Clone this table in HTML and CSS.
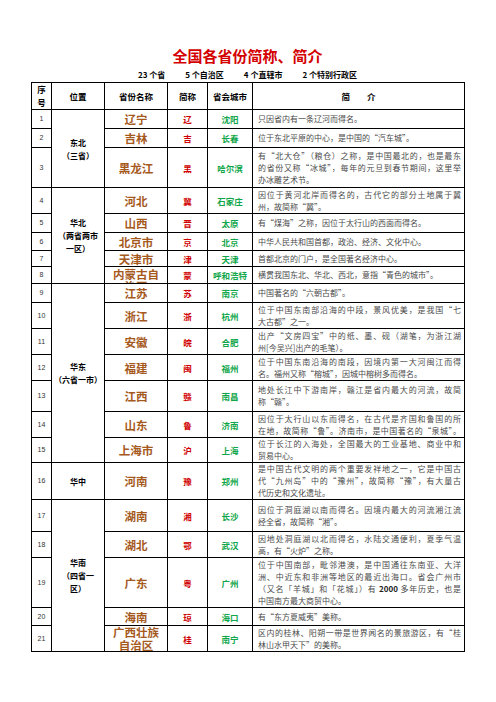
FILE: index.html
```html
<!DOCTYPE html>
<html lang="zh-CN">
<head>
<meta charset="utf-8">
<title>全国各省份简称、简介</title>
<link rel="stylesheet" href="styles.css">
</head>
<body>
<div class="page">
  <h1 class="title">全国各省份简称、简介</h1>
  <div class="summary"><span>23 个省</span><span>5 个自治区</span><span>4 个直辖市</span><span>2 个特别行政区</span></div>
  <table class="prov">
    <colgroup><col class="c-no"><col class="c-region"><col class="c-name"><col class="c-abbr"><col class="c-cap"><col class="c-desc"></colgroup>
    <thead>
      <tr class="h26"><th class="hno">序<br>号</th><th>位置</th><th>省份名称</th><th>简称</th><th>省会城市</th><th class="hdesc">简　　介</th></tr>
    </thead>
    <tbody>
      <tr class="h19"><td class="no">1</td><td class="region" rowspan="3">东北<br>（三省）</td><td class="name">辽宁</td><td class="abbr">辽</td><td class="cap">沈阳</td><td class="desc">只因省内有一条辽河而得名。</td></tr>
      <tr class="h19"><td class="no">2</td><td class="name">吉林</td><td class="abbr">吉</td><td class="cap">长春</td><td class="desc">位于东北平原的中心，是中国的“汽车城”。</td></tr>
      <tr class="h40"><td class="no">3</td><td class="name">黑龙江</td><td class="abbr">黑</td><td class="cap">哈尔滨</td><td class="desc"><span class="ln">有“北大仓”（粮仓）之称，是中国最北的，也是最东</span><span class="ln">的省份又称“冰城”，每年的元旦到春节期间，这里举</span>办冰雕艺术节。</td></tr>
      <tr class="h26"><td class="no">4</td><td class="region" rowspan="5">华北<br>（两省两市<br>一区）</td><td class="name">河北</td><td class="abbr">冀</td><td class="cap">石家庄</td><td class="desc"><span class="ln">因位于黄河北岸而得名的，古代它的部分土地属于冀</span>州，故简称“冀”。</td></tr>
      <tr class="h19"><td class="no">5</td><td class="name">山西</td><td class="abbr">晋</td><td class="cap">太原</td><td class="desc">有“煤海”之称，因位于太行山的西面而得名。</td></tr>
      <tr class="h18"><td class="no">6</td><td class="name">北京市</td><td class="abbr">京</td><td class="cap">北京</td><td class="desc">中华人民共和国首都，政治、经济、文化中心。</td></tr>
      <tr class="h16"><td class="no">7</td><td class="name">天津市</td><td class="abbr">津</td><td class="cap">天津</td><td class="desc">首都北京的门户，是全国著名经济中心。</td></tr>
      <tr class="h17"><td class="no">8</td><td class="name"><div class="clip">内蒙古自<br>治区</div></td><td class="abbr">蒙</td><td class="cap">呼和浩特</td><td class="desc">横贯我国东北、华北、西北，意指“青色的城市”。</td></tr>
      <tr class="h19"><td class="no">9</td><td class="region" rowspan="7">华东<br>（六省一市）</td><td class="name">江苏</td><td class="abbr">苏</td><td class="cap">南京</td><td class="desc">中国著名的“六朝古都”。</td></tr>
      <tr class="h26"><td class="no">10</td><td class="name">浙江</td><td class="abbr">浙</td><td class="cap">杭州</td><td class="desc"><span class="ln">位于中国东南部沿海的中段，景风优美，是我国“七</span>大古都”之一。</td></tr>
      <tr class="h26"><td class="no">11</td><td class="name">安徽</td><td class="abbr">皖</td><td class="cap">合肥</td><td class="desc"><span class="ln">出产“文房四宝”中的纸、墨、砚（湖笔，为浙江湖</span>州[今吴兴]出产的毛笔）。</td></tr>
      <tr class="h26"><td class="no">12</td><td class="name">福建</td><td class="abbr">闽</td><td class="cap">福州</td><td class="desc"><span class="ln">位于中国东南沿海的南段，因境内第一大河闽江而得</span>名。福州又称“榕城”，因城中榕树多而得名。</td></tr>
      <tr class="h31"><td class="no">13</td><td class="name">江西</td><td class="abbr">赣</td><td class="cap">南昌</td><td class="desc"><span class="ln">地处长江中下游南岸，赣江是省内最大的河流，故简</span>称“赣”。</td></tr>
      <tr class="h26"><td class="no">14</td><td class="name">山东</td><td class="abbr">鲁</td><td class="cap">济南</td><td class="desc"><span class="ln">因位于太行山以东而得名，在古代是齐国和鲁国的所</span><span class="ln">在地，故简称“鲁”。济南市，是中国著名的“泉城”。</span></td></tr>
      <tr class="h25"><td class="no">15</td><td class="name">上海市</td><td class="abbr">沪</td><td class="cap">上海</td><td class="desc"><span class="ln">位于长江的入海处，全国最大的工业基地、商业中和</span>贸易中心。</td></tr>
      <tr class="h37"><td class="no">16</td><td class="region">华中</td><td class="name">河南</td><td class="abbr">豫</td><td class="cap">郑州</td><td class="desc"><span class="ln">是中国古代文明的两个重要发祥地之一，它是中国古</span><span class="ln">代“九州岛”中的“豫州”，故简称“豫”，有大量古</span>代历史和文化遗址。</td></tr>
      <tr class="h32"><td class="no">17</td><td class="region" rowspan="5">华南<br>（四省一<br>区）</td><td class="name">湖南</td><td class="abbr">湘</td><td class="cap">长沙</td><td class="desc"><span class="ln">因位于洞庭湖以南而得名。因境内最大的河流湘江流</span>经全省，故简称“湘”。</td></tr>
      <tr class="h26"><td class="no">18</td><td class="name">湖北</td><td class="abbr">鄂</td><td class="cap">武汉</td><td class="desc"><span class="ln">因地处洞庭湖以北而得名，水陆交通便利，夏季气温</span>高，有“火炉”之称。</td></tr>
      <tr class="h50"><td class="no">19</td><td class="name">广东</td><td class="abbr">粤</td><td class="cap">广州</td><td class="desc"><span class="ln">位于中国南部，毗邻港澳，是中国通往东南亚、大洋</span><span class="ln">洲、中近东和非洲等地区的最近出海口。省会广州市</span><span class="ln">（又名「羊城」和「花城」）有 <b>2000</b> 多年历史，也是</span>中国南方最大商贸中心。</td></tr>
      <tr class="h18"><td class="no">20</td><td class="name">海南</td><td class="abbr">琼</td><td class="cap">海口</td><td class="desc">有“东方夏威夷”美称。</td></tr>
      <tr class="h26"><td class="no">21</td><td class="name two">广西壮族<br>自治区</td><td class="abbr">桂</td><td class="cap">南宁</td><td class="desc"><span class="ln">区内的桂林、阳朔一带是世界闻名的景旅游区，有“桂</span>林山水甲天下”的美称。</td></tr>
    </tbody>
  </table>
</div>
</body>
</html>
```

FILE: styles.css
```css
* { box-sizing: border-box; }
html, body { margin: 0; padding: 0; background: #fff; }
body {
  font-family: "Noto Sans CJK SC", "Noto Sans", sans-serif;
  color: #000;
}
.page {
  width: 433px;
  margin-left: 31px;
  padding-top: 46px;
}
.title {
  margin: 0;
  font-size: 15px;
  line-height: 20px;
  font-weight: 700;
  color: #d40000;
  text-align: center;
}
.summary {
  display: flex;
  justify-content: center;
  gap: 20px;
  margin-top: 4px;
  font-size: 8px;
  line-height: 10px;
  font-weight: 700;
}
.prov {
  margin-top: 2px;
  width: 433px;
  table-layout: fixed;
  border-collapse: collapse;
  border: 1.5px solid #000;
}
.c-no { width: 20px; }
.c-region { width: 53px; }
.c-name { width: 63px; }
.c-abbr { width: 40px; }
.c-cap { width: 45px; }
.c-desc { width: 212px; }
.prov th, .prov td {
  border: 1px solid #000;
  padding: 0;
  text-align: center;
  vertical-align: middle;
  overflow: hidden;
}
.prov th {
  font-size: 8.5px;
  line-height: 12px;
  font-weight: 700;
}
.prov th.hno { line-height: 13px; }
.h16 { height: 16px; }
.h17 { height: 17px; }
.h18 { height: 18px; }
.h19 { height: 19px; }
.h25 { height: 25px; }
.h26 { height: 26px; }
.h31 { height: 31px; }
.h32 { height: 32px; }
.h37 { height: 37px; }
.h40 { height: 40px; }
.h50 { height: 50px; }
.no {
  font-family: "Liberation Sans", "Noto Sans CJK SC", sans-serif;
  font-size: 7px;
  line-height: 10px;
  color: #333;
}
.region {
  font-size: 8px;
  line-height: 13px;
  font-weight: 700;
  white-space: nowrap;
}
.name {
  font-size: 11.5px;
  line-height: 12px;
  font-weight: 700;
  color: #a5591d;
  white-space: nowrap;
}
.name.two { line-height: 12.5px; }
.clip {
  height: 16px;
  overflow: hidden;
  padding-top: 1px;
}
.abbr {
  font-size: 8.5px;
  line-height: 10px;
  font-weight: 700;
  color: #d00000;
}
.cap {
  font-size: 8.5px;
  line-height: 10px;
  font-weight: 700;
  color: #10a64a;
  white-space: nowrap;
}
.prov td.desc {
  text-align: left;
  padding: 0 3px 0 5px;
  font-size: 8px;
  line-height: 12px;
  color: #4a4a4a;
  white-space: nowrap;
}
.desc .ln {
  display: block;
  text-align: justify;
  text-align-last: justify;
}
.desc b { font-weight: 700; color: #222; }
```
